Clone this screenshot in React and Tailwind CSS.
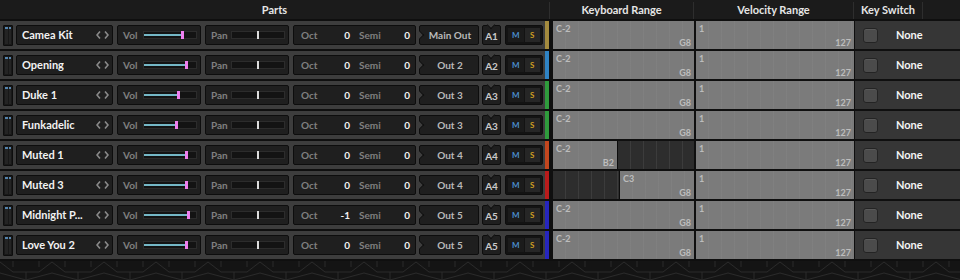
import React from 'react';

const rows = [
  { name: 'Camea Kit', vol: 0.72, oct: '0', out: 'Main Out', port: 'A1', color: '#a38a3e', kb: null },
  { name: 'Opening', vol: 0.78, oct: '0', out: 'Out 2', port: 'A2', color: '#2f83c4', kb: null },
  { name: 'Duke 1', vol: 0.63, oct: '0', out: 'Out 3', port: 'A3', color: '#2f9b3c', kb: null },
  { name: 'Funkadelic', vol: 0.6, oct: '0', out: 'Out 3', port: 'A3', color: '#2f9b3c', kb: null },
  { name: 'Muted 1', vol: 0.78, oct: '0', out: 'Out 4', port: 'A4', color: '#c2461e', kb: { from: 0, to: 64, lo: 'C-2', hi: 'B2' } },
  { name: 'Muted 3', vol: 0.78, oct: '0', out: 'Out 4', port: 'A4', color: '#b81b1b', kb: { from: 67, to: 141, lo: 'C3', hi: 'G8' } },
  { name: 'Midnight P...', vol: 0.82, oct: '-1', out: 'Out 5', port: 'A5', color: '#2626be', kb: null },
  { name: 'Love You 2', vol: 0.78, oct: '0', out: 'Out 5', port: 'A5', color: '#2626be', kb: null },
];

const font = { fontFamily: 'Lato, "Open Sans", sans-serif' };
const box = 'flex h-[20px] items-center rounded-[2px] border border-[#0d0d0d] bg-[#1f1f1f]';
const grid =
  'bg-[repeating-linear-gradient(90deg,transparent_0,transparent_12px,rgba(255,255,255,0.035)_12px,rgba(255,255,255,0.035)_13px)]';
const darkGrid =
  'bg-[repeating-linear-gradient(90deg,transparent_0,transparent_12px,rgba(255,255,255,0.07)_12px,rgba(255,255,255,0.07)_13px)]';

function Meter() {
  return (
    <div className="flex h-[21px] w-[10px] gap-[1px] rounded-[1px] border border-[#0d0d0d] bg-[#181818] p-[1px]">
      <div className="flex-1 border-t-2 border-[#5685ad] bg-[#242424]" />
      <div className="flex-1 border-t-2 border-[#5685ad] bg-[#242424]" />
    </div>
  );
}

function Arrows() {
  return (
    <svg width="13" height="8" viewBox="0 0 13 8" className="shrink-0">
      <path d="M4 0.5 L1 4 L4 7.5" fill="none" stroke="#8a8a8a" strokeWidth="1.6" />
      <path d="M9 0.5 L12 4 L9 7.5" fill="none" stroke="#8a8a8a" strokeWidth="1.6" />
    </svg>
  );
}

function RangeCell({ lo, hi, width }) {
  return (
    <div className={`flex h-full flex-col justify-between bg-[#7b7b7b] px-[3px] pb-[1px] pt-[2px] text-[9px] font-bold leading-[11px] text-[#bdbdbd] ${grid}`} style={width}>
      <span>{lo}</span>
      <span className="self-end">{hi}</span>
    </div>
  );
}

function KeyboardCell({ kb }) {
  if (!kb) {
    return (
      <div className="ml-[2px] h-full w-[141px]">
        <RangeCell lo="C-2" hi="G8" width={{ width: '100%' }} />
      </div>
    );
  }
  return (
    <div className="ml-[2px] flex h-full w-[141px]">
      {kb.from > 0 && (
        <div className={`h-full border-r border-[#0d0d0d] bg-[#2d2d2d] ${darkGrid}`} style={{ width: kb.from }} />
      )}
      <RangeCell lo={kb.lo} hi={kb.hi} width={{ width: kb.to - kb.from }} />
      {kb.to < 141 && <div className={`h-full flex-1 border-l border-[#0d0d0d] bg-[#2d2d2d] ${darkGrid}`} />}
    </div>
  );
}

function Row({ r }) {
  const pos = Math.round(r.vol * 52);
  return (
    <div className="flex h-[30px] border-t-2 border-[#0f0f0f] bg-[#3d3d3d]">
      <div className="flex items-center pl-[3px]">
        <Meter />
        <div className={`${box} ml-[3px] w-[97px] justify-between pl-[5px] pr-[3px]`}>
          <span className="truncate text-[11px] font-bold text-[#f2f2f2]">{r.name}</span>
          <Arrows />
        </div>
        <div className={`${box} ml-[4px] w-[84px]`}>
          <span className="w-[25px] pl-[5px] text-[10px] font-bold text-[#808080]">Vol</span>
          <div className="relative h-[8px] w-[54px] border border-[#2c2c2c] bg-[#131313]">
            <div className="absolute left-0 top-[2px] h-[2px] bg-[#74b7c6]" style={{ width: pos }} />
            <div className="absolute bottom-[-1px] top-[-1px] w-[3px] bg-[#f07ff0]" style={{ left: pos }} />
          </div>
        </div>
        <div className={`${box} ml-[4px] w-[84px]`}>
          <span className="w-[25px] pl-[5px] text-[10px] font-bold text-[#808080]">Pan</span>
          <div className="relative h-[8px] w-[54px] border border-[#2c2c2c] bg-[#131313]">
            <div className="absolute bottom-[-1px] left-[25px] top-[-1px] w-[2px] bg-[#dcdcdc]" />
          </div>
        </div>
        <div className={`${box} ml-[4px] w-[123px] text-[10px] font-bold`}>
          <div className="flex w-[61px] justify-between pl-[7px] pr-[5px]">
            <span className="text-[#808080]">Oct</span>
            <span className="text-[#f2f2f2]">{r.oct}</span>
          </div>
          <div className="flex flex-1 justify-between pl-[4px] pr-[5px]">
            <span className="text-[#808080]">Semi</span>
            <span className="text-[#f2f2f2]">0</span>
          </div>
        </div>
        <div className={`${box} relative ml-[3px] w-[60px] justify-center text-[10px] font-bold text-[#b9b9b9]`}>
          <div className="absolute left-[-3px] top-[6px] h-[6px] w-[6px] rotate-45 border-r border-t border-[#0d0d0d] bg-[#3d3d3d]" />
          <span className="pl-[2px]">{r.out}</span>
        </div>
        <div className={`${box} relative ml-[3px] w-[19px] justify-center text-[10px] font-bold text-[#cacaca]`}>
          <div className="absolute left-[5px] top-[-4px] h-[6px] w-[6px] rotate-45 border-b border-r border-[#0d0d0d] bg-[#3d3d3d]" />
          <span className="pt-[2px]">{r.port}</span>
        </div>
        <div className="ml-[4px] flex h-[20px] w-[38px] gap-[1px] rounded-[2px] border border-[#0d0d0d] bg-[#131313] p-[2px] text-[8px] font-bold">
          <div className="flex flex-1 items-center justify-center bg-[#1b1b1b] text-[#4b90cf]">M</div>
          <div className="flex flex-1 items-center justify-center bg-[#262626] text-[#cf9f22]">S</div>
        </div>
        <div className="ml-[2px] h-full w-[4px]" style={{ backgroundColor: r.color }} />
      </div>
      <div className="flex flex-1 items-stretch bg-[#0f0f0f] pl-[2px]">
        <KeyboardCell kb={r.kb} />
        <div className="ml-[2px] h-full w-[158px]">
          <RangeCell lo="1" hi="127" width={{ width: '100%' }} />
        </div>
        <div className="ml-[1px] flex h-full flex-1 items-center bg-[#363636]">
          <div className="ml-[8px] h-[15px] w-[15px] rounded-[3px] border border-[#242424] bg-[#4b4b4b] shadow-[inset_0_1px_0_rgba(255,255,255,0.08)]" />
          <span className="ml-[18px] text-[11px] font-bold text-[#f4f4f4]">None</span>
        </div>
      </div>
    </div>
  );
}

export default function App() {
  return (
    <div className="h-[280px] w-[960px] overflow-hidden bg-[#141414]" style={font}>
      <div className="flex h-[19px] items-center bg-[#1b1b1b] pt-[2px] text-[11px] font-bold text-[#e6e6e6]">
        <div className="w-[549px] text-center">Parts</div>
        <div className="h-full w-[144px] border-l border-[#2e2e2e] text-center">Keyboard Range</div>
        <div className="h-full w-[160px] border-l border-[#2e2e2e] text-center">Velocity Range</div>
        <div className="h-full w-[69px] border-l border-[#2e2e2e] text-center">Key Switch</div>
        <div className="h-full flex-1 border-l border-[#2e2e2e]" />
      </div>
      {rows.map((r) => (
        <Row key={r.name} r={r} />
      ))}
      <div className="h-[2px] bg-[#0f0f0f]" />
      <svg width="960" height="19" className="block">
        <defs>
          <pattern id="chev" width="52" height="19" patternUnits="userSpaceOnUse">
            <path d="M0 1 L13 11 L39 11 L52 1 M26 11 L26 19 M0 12 L26 19 M52 12 L26 19 M13 0 L13 6 M39 0 L39 6" fill="none" stroke="#2a2a2a" strokeWidth="1" />
          </pattern>
        </defs>
        <rect width="960" height="19" fill="#141414" />
        <rect width="960" height="19" fill="url(#chev)" />
      </svg>
    </div>
  );
}
